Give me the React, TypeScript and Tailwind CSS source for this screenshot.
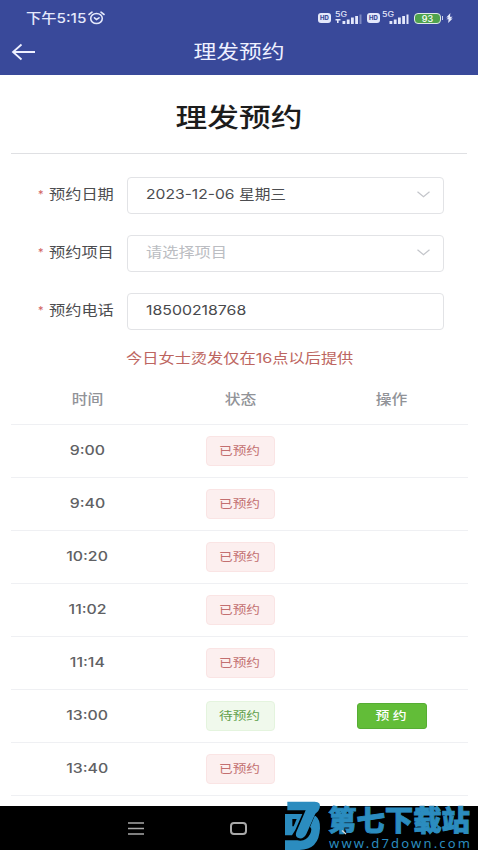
import type { ReactNode } from "react";

// ── Data ──
interface Slot {
  time: string;
  open?: boolean;
}

const slots: Slot[] = [
  { time: "9:00" },
  { time: "9:40" },
  { time: "10:20" },
  { time: "11:02" },
  { time: "11:14" },
  { time: "13:00", open: true },
  { time: "13:40" },
];

// ── Signal: 5G label over rising bars ──
function Signal({ weak = false }: { weak?: boolean }) {
  return (
    <svg width="28" height="14" viewBox="0 0 28 14" fill="#e4e8fb">
      <text x="0" y="6" fontSize="7" fontFamily="Inter, sans-serif" fontWeight="500" textLength="12" lengthAdjust="spacingAndGlyphs">5G</text>
      {weak && <path d="M.5 8h5v1.4H3.600v2.600H2V9.400H.5z" />}
      <rect x="7.500" y="10" width="2.800" height="3" />
      <rect x="11.800" y="8.500" width="2.800" height="4.500" />
      <rect x="16" y="6.500" width="2.800" height="6.500" />
      <rect x="20.200" y="5" width="2.800" height="8" />
      <rect x="24.500" y="3.500" width="2" height="9.500" opacity={weak ? 0.4 : 1} />
    </svg>
  );
}

function HdBadge() {
  return (
    <span className="flex h-[10px] w-[13px] items-center justify-center rounded-[3px] bg-[#e4e8fb] text-[6px] font-extrabold leading-none text-[#39499a]">
      HD
    </span>
  );
}

// ── StatusBar ──
function StatusBar() {
  return (
    <div className="flex h-[34px] items-center justify-between pl-[26px] pr-[25px] pt-[2px] text-[#e4e8fb]">
      <div className="flex items-center gap-[1px]">
        <span className="w-[61px] whitespace-nowrap">
          <span className="inline-block origin-left -translate-y-px scale-x-[1.13] text-[13.500px] font-medium leading-5">下午5:15</span>
        </span>
        <svg width="17" height="14" viewBox="0 0 17 14" fill="none" stroke="currentColor" strokeWidth="1.600" strokeLinecap="round">
          <ellipse cx="8.500" cy="7.500" rx="5.800" ry="5" />
          <path d="M1 3.500 4 1.200M16 3.500 13 1.200M6.500 6.800 8.500 8.500 11 6.800" />
        </svg>
      </div>
      <div className="flex items-center">
        <HdBadge />
        <span className="ml-[4px]"><Signal weak /></span>
        <span className="ml-[4px]"><HdBadge /></span>
        <span className="ml-[2px]"><Signal /></span>
        <span className="ml-[4px] flex h-[11px] w-[27px] items-center justify-center rounded-[4px] border border-[#dfe9e8] bg-[#4fa34d] text-[9px] font-medium leading-none text-white">
          93
        </span>
        <span className="ml-px h-[4px] w-px bg-[#cdd3f0]" />
        <svg className="ml-[3px]" width="7" height="10" viewBox="0 0 7 11" fill="#e4e8fb">
          <path d="M4.500 0 0 5h2.500L0 6.800h2.500L2 11l5-5H4.600l2.400-2H4z" />
        </svg>
      </div>
    </div>
  );
}

// ── FormRow: required label + boxed field ──
function FormRow({ label, children }: { label: string; children: ReactNode }) {
  return (
    <div className="flex h-[38px] items-center">
      <div className="flex w-[127px] shrink-0 items-center pb-[2px] pl-[38px]">
        <span className="w-[11px] text-[11px] leading-none text-[#d0605f]">*</span>
        <span className="inline-block origin-left scale-x-[1.2] whitespace-nowrap text-[13.500px] text-[#4c4d50]">{label}</span>
      </div>
      <div className="flex h-[37px] w-[317px] items-center justify-between rounded-[4px] border border-[#e2e3e6] pb-[2px] pl-[18px] pr-[13px]">
        {children}
      </div>
    </div>
  );
}

function Chevron() {
  return (
    <svg width="13" height="7" viewBox="0 0 13 7" fill="none" stroke="#c3c5ca" strokeWidth="1.200">
      <path d="M.5.8 6.500 5.800 12.500.8" />
    </svg>
  );
}

// ── SlotRow ──
function SlotRow({ time, open = false }: Slot) {
  return (
    <div className="grid h-[53px] grid-cols-[153px_152px_151px] items-center justify-items-center border-b border-[#eff0f3]">
      <span className="inline-block scale-x-[1.22] text-[13px] font-medium text-[#606164]">{time}</span>
      <span
        className={`flex h-[30px] w-[69px] items-center justify-center rounded-[4px] border ${
          open ? "border-[#e4f4de] bg-[#f0f9ec] text-[#62a04c]" : "border-[#fae4e4] bg-[#fcefef] text-[#c36f70]"
        }`}
      >
        <span className="inline-block translate-y-px scale-x-[1.17] text-[11.700px]">{open ? "待预约" : "已预约"}</span>
      </span>
      {open && (
        <button className="flex h-[26px] w-[70px] items-center justify-center rounded-[3px] border border-[#56ad34] bg-[#62bd38] text-white">
          <span className="inline-block translate-y-px scale-x-[1.2] text-[11.500px] font-medium">预 约</span>
        </button>
      )}
    </div>
  );
}

// ── Watermark: site logo and address over the nav bar ──
function Watermark() {
  return (
    <div className="absolute left-[280px] top-[-11px] flex h-[55px] w-[198px]">
      <svg className="shrink-0" width="48" height="55" viewBox="0 0 144 165" fill="#2b8cbf">
        <path d="M22 20H104Q124 20 119 39 117 49 106 56L79 117Q71 132 58 130 43 126 49 111L77 46H22z" />
        <path d="M107 63Q121 74 120 100 117 165 58 165H15V136H52Q78 141 90 118 98 100 90 96L104 63z" />
        <path fillRule="evenodd" d="M15 57H67L46 105 36 121H15zM37 72V94H41L50 72z" />
      </svg>
      <svg width="150" height="55" viewBox="0 0 150 55" fill="#2b8cbf">
        <text x="0" y="36" textLength="142" lengthAdjust="spacingAndGlyphs" fontSize="28" fontWeight="900" fontFamily="'Noto Sans CJK SC', sans-serif" stroke="#2b8cbf" strokeWidth=".9">第七下载站</text>
        <text x="1" y="52.500" textLength="141" fontSize="13" fontFamily="'Noto Sans', sans-serif">www.d7down.com</text>
        {/* Tip of the back chevron */}
        <path d="M14 35.500 18 39" stroke="#d5dde2" strokeWidth="1.400" />
      </svg>
    </div>
  );
}

export default function App() {
  return (
    <div className="flex h-[850px] w-[478px] flex-col overflow-hidden bg-white font-[Inter,'Noto_Sans_CJK_SC',sans-serif]">
      {/* Top bar */}
      <header className="h-[75px] shrink-0 bg-[#39499a]">
        <StatusBar />
        <div className="grid h-[36px] grid-cols-[1fr_auto_1fr] items-center">
          <svg className="ml-[11px]" width="25" height="18" viewBox="0 0 25 18" fill="none" stroke="#eef0ff" strokeWidth="1.800">
            <path d="M24 9H2M10.500 1.500 2 9l8.500 7.500" />
          </svg>
          <h1 className="translate-y-px scale-x-[1.2] text-[19px] leading-6 text-[#eef0ff]">理发预约</h1>
        </div>
      </header>

      <main className="flex-1 px-[11px]">
        <h2 className="flex h-[79px] items-center justify-center border-b border-[#dfe0e3] pt-[7px] text-[26px] font-medium text-[#1c1c1c]">
          <span className="inline-block scale-x-[1.22]">理发预约</span>
        </h2>

        {/* Booking form */}
        <div className="-ml-[11px] mt-[22px] flex flex-col gap-[20px]">
          <FormRow label="预约日期">
            <span className="inline-block origin-left scale-x-[1.16] text-[13.500px] text-[#4c4d50]">2023-12-06 星期三</span>
            <Chevron />
          </FormRow>
          <FormRow label="预约项目">
            <span className="inline-block origin-left scale-x-[1.2] text-[13.500px] text-[#bbbdc2]">请选择项目</span>
            <Chevron />
          </FormRow>
          <FormRow label="预约电话">
            <span className="inline-block origin-left translate-y-px scale-x-[1.22] text-[13px] text-[#48494c]">18500218768</span>
          </FormRow>
        </div>

        <p className="mt-[17px] flex h-[22px] items-center justify-center pl-[2px] text-[13.500px] text-[#bd6560]">
          <span className="inline-block scale-x-[1.2]">今日女士烫发仅在16点以后提供</span>
        </p>

        {/* Slots table */}
        <div className="w-[457px]">
          <div className="grid h-[56px] grid-cols-[153px_152px_151px] items-center justify-items-center border-b border-[#eff0f3] pt-[5px] text-[13.500px] font-medium text-[#919398]">
            <span className="inline-block scale-x-[1.17]">时间</span>
            <span className="inline-block scale-x-[1.17]">状态</span>
            <span className="inline-block scale-x-[1.17]">操作</span>
          </div>
          {slots.map((slot) => (
            <SlotRow key={slot.time} {...slot} />
          ))}
        </div>
      </main>

      {/* System nav */}
      <footer className="relative h-[44px] shrink-0 bg-black">
        <div className="flex h-full items-center pl-[128px]">
          <svg width="17" height="13" viewBox="0 0 17 13" stroke="#a9a9a9" strokeWidth="1.600">
            <path d="M0 1h16M0 6.500h16M0 12h16" />
          </svg>
          <span className="ml-[85px] h-[13px] w-[17px] rounded-[4px] border-2 border-[#a9a9a9]" />
        </div>
        <Watermark />
      </footer>
    </div>
  );
}
